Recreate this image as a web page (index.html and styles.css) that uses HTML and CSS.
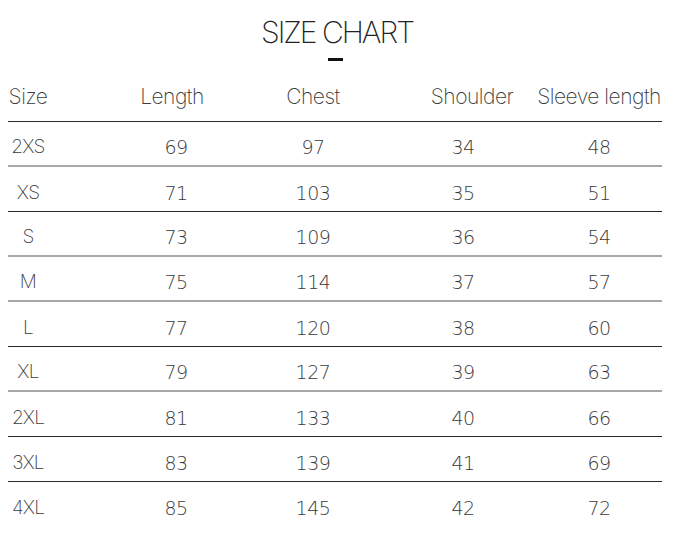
FILE: index.html
```html
<!DOCTYPE html>
<html lang="en">
<head>
<meta charset="utf-8">
<title>Size Chart</title>
<link rel="stylesheet" href="styles.css">
</head>
<body>
<main class="chart">
  <h1 class="title">SIZE CHART</h1>
  <div class="dash"></div>
  <div class="row head dark">
    <div class="cell c1">Size</div>
    <div class="cell length">Length</div>
    <div class="cell">Chest</div>
    <div class="cell shoulder">Shoulder</div>
    <div class="cell">Sleeve length</div>
  </div>
  <div class="row gray"><div class="cell c1 lbl">2XS</div><div class="cell num">69</div><div class="cell num">97</div><div class="cell num">34</div><div class="cell num">48</div></div>
  <div class="row dark"><div class="cell c1 lbl">XS</div><div class="cell num">71</div><div class="cell num">103</div><div class="cell num">35</div><div class="cell num">51</div></div>
  <div class="row gray"><div class="cell c1 lbl">S</div><div class="cell num">73</div><div class="cell num">109</div><div class="cell num">36</div><div class="cell num">54</div></div>
  <div class="row gray"><div class="cell c1 lbl">M</div><div class="cell num">75</div><div class="cell num">114</div><div class="cell num">37</div><div class="cell num">57</div></div>
  <div class="row dark"><div class="cell c1 lbl">L</div><div class="cell num">77</div><div class="cell num">120</div><div class="cell num">38</div><div class="cell num">60</div></div>
  <div class="row gray"><div class="cell c1 lbl">XL</div><div class="cell num">79</div><div class="cell num">127</div><div class="cell num">39</div><div class="cell num">63</div></div>
  <div class="row dark"><div class="cell c1 lbl">2XL</div><div class="cell num">81</div><div class="cell num">133</div><div class="cell num">40</div><div class="cell num">66</div></div>
  <div class="row dark"><div class="cell c1 lbl">3XL</div><div class="cell num">83</div><div class="cell num">139</div><div class="cell num">41</div><div class="cell num">69</div></div>
  <div class="row last"><div class="cell c1 lbl">4XL</div><div class="cell num">85</div><div class="cell num">145</div><div class="cell num">42</div><div class="cell num">72</div></div>
</main>
</body>
</html>
```
FILE: styles.css
```css
html, body {
  margin: 0;
  padding: 0;
  background: #ffffff;
}

.chart {
  width: 654px;
  margin: 0 0 0 8px;
  padding-top: 17px;
  color: #3a3a3a;
  font-family: Inter, "Liberation Sans", sans-serif;
  font-weight: 200;
}

.title {
  margin: 0 0 0 -8px;
  width: 674px;
  text-align: center;
  font-size: 30px;
  line-height: 30px;
  font-weight: 200;
  letter-spacing: -2px;
  color: #222222;
}

.dash {
  width: 15px;
  height: 3px;
  background: #111111;
  margin: 11px 0 0 320px;
}

.row {
  display: grid;
  grid-template-columns: 92px 152px 122px 178px 94px;
  align-items: end;
  justify-items: center;
  height: 44px;
  box-sizing: content-box;
}

.row.head {
  height: 60px;
}

.row.dark {
  border-bottom: 1px solid #2a2a2a;
}

.row.gray {
  border-bottom: 2px solid #a8a8a8;
  height: 43px;
}

.cell {
  text-align: center;
  white-space: nowrap;
  font-size: 20px;
  line-height: 20px;
  padding-bottom: 8px;
}

.head .cell {
  font-size: 21px;
  line-height: 22px;
  padding-bottom: 13px;
  letter-spacing: -0.5px;
}

.head .length {
  padding-right: 8px;
}

.head .shoulder {
  padding-left: 18px;
}

.c1 {
  width: 40px;
  justify-self: start;
}

.lbl {
  font-size: 19px;
  letter-spacing: -0.8px;
}

.num {
  font-family: "DejaVu Sans", sans-serif;
  font-weight: 200;
  font-size: 19px;
  line-height: 20px;
  letter-spacing: -0.5px;
}
```
